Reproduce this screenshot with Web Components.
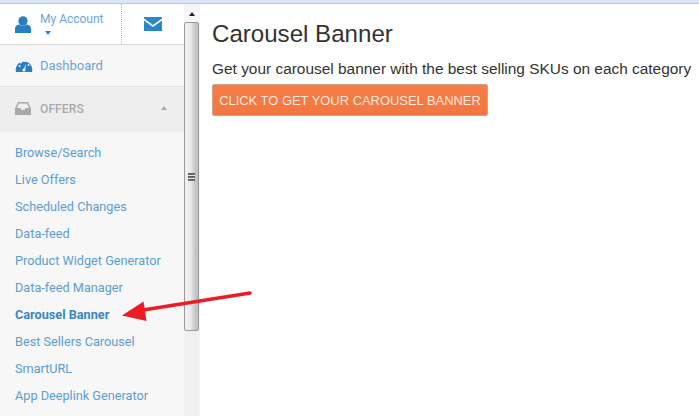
<!DOCTYPE html>
<html>
<head>
<meta charset="utf-8">
<style>
  html, body { margin: 0; height: 100%; background: #fff; overflow: hidden; }
</style>
</head>
<body>
<app-shell>
  <side-nav slot="side">
    <nav-link>Browse/Search</nav-link>
    <nav-link>Live Offers</nav-link>
    <nav-link>Scheduled Changes</nav-link>
    <nav-link>Data-feed</nav-link>
    <nav-link>Product Widget Generator</nav-link>
    <nav-link>Data-feed Manager</nav-link>
    <nav-link active>Carousel Banner</nav-link>
    <nav-link>Best Sellers Carousel</nav-link>
    <nav-link>SmartURL</nav-link>
    <nav-link>App Deeplink Generator</nav-link>
  </side-nav>
  <fake-scrollbar slot="scroll"></fake-scrollbar>
  <banner-panel slot="main"></banner-panel>
</app-shell>
<script>
class AppShell extends HTMLElement {
  constructor() {
    super();
    this.attachShadow({ mode: 'open' });
  }

  connectedCallback() {
    this.shadowRoot.innerHTML = `
      <style>
        :host {
          display: block;
          position: relative;
          width: 699px;
          height: 416px;
          overflow: hidden;
        }
        .strip {
          height: 3px;
          background: #d9e6f6;
          border-bottom: 1px solid #b4c8e0;
        }
        .body {
          display: grid;
          grid-template-columns: 184px 16px 1fr;
          height: 412px;
        }
        svg {
          position: absolute;
          left: 115px;
          top: 285px;
        }
      </style>
      <div class="strip"></div>
      <div class="body">
        <slot name="side"></slot>
        <slot name="scroll"></slot>
        <slot name="main"></slot>
      </div>
      <svg width="140" height="45" viewBox="115 285 140 45">
        <path d="M250 293 L140 310.5" stroke="#ed1c24" stroke-width="3.5" stroke-linecap="round" fill="none"/>
        <path d="M122 315.5 L143.500 301.500 L146.500 321 Z" fill="#ed1c24"/>
      </svg>
    `;
  }
}

class SideNav extends HTMLElement {
  constructor() {
    super();
    this.attachShadow({ mode: 'open' });
  }

  connectedCallback() {
    this.shadowRoot.innerHTML = `
      <style>
        :host {
          display: block;
          background: #f7f7f7;
          font-family: Roboto, "Liberation Sans", sans-serif;
          font-size: 13px;
          color: #428bca;
          overflow: hidden;
        }
        .top {
          display: flex;
          height: 40px;
          background: #fff;
          border-bottom: 1px solid #d8d8d8;
        }
        .account {
          width: 122px;
          display: flex;
          gap: 9px;
          padding: 9px 0 0 15px;
          box-sizing: border-box;
          border-right: 1px dotted #b8b8b8;
        }
        .account svg { margin-top: 3px; }
        .name { line-height: 13px; font-size: 12px; color: #6aa5d6; }
        .caret {
          width: 0;
          height: 0;
          margin: 5px 0 0 5px;
          border: 3.5px solid transparent;
          border-top: 4px solid #2a85c9;
          border-bottom: 0;
        }
        .mail {
          flex: 1;
          display: flex;
          justify-content: center;
          padding-top: 13px;
        }
        .row {
          display: flex;
          align-items: center;
          padding-left: 15px;
          gap: 8px;
        }
        .dash {
          border-bottom: 1px solid #e4e4e4;
          color: #6aa5d6;
          padding-bottom: 1px;
          box-sizing: border-box;
          height: 42px;
          gap: 7px;
        }
        .offers {
          height: 45px;
          background: #eee;
          color: #ababab;
          font-size: 12.2px;
          font-weight: 500;
          position: relative;
          padding-bottom: 2px;
          box-sizing: border-box;
          gap: 9px;
        }
        .up {
          position: absolute;
          right: 17px;
          top: 19px;
          width: 0;
          height: 0;
          border: 3.5px solid transparent;
          border-bottom: 4px solid #ababab;
          border-top: 0;
        }
        .list { padding-top: 7px; }
      </style>
      <div class="top">
        <div class="account">
          <svg width="16" height="17" viewBox="0 0 16 17">
            <ellipse cx="8" cy="5" rx="4.6" ry="4.800" fill="#2a7fc1"/>
            <path d="M0 17 V13 Q0 9 4 8.500 Q8 11 12 8.500 Q16 9 16 13 V17 Z" fill="#2a7fc1"/>
          </svg>
          <div>
            <div class="name">My Account</div>
            <div class="caret"></div>
          </div>
        </div>
        <div class="mail">
          <svg width="18" height="14" viewBox="0 0 18 14">
            <path d="M0 0 H18 V1.500 L9 8 L0 1.500 Z" fill="#2a85c9"/>
            <path d="M0 3.500 L9 10 L18 3.500 V14 H0 Z" fill="#2a85c9"/>
          </svg>
        </div>
      </div>
      <div class="row dash">
        <svg width="18" height="14" viewBox="0 0 17 14">
          <path d="M0.500 14 A8.300 8.300 0 1 1 16.500 14 Z" fill="#2a7fc1"/>
          <circle cx="4" cy="8" r="1" fill="#fff"/>
          <circle cx="5.500" cy="4.500" r="1" fill="#fff"/>
          <circle cx="9" cy="3" r="1" fill="#fff"/>
          <circle cx="13" cy="7" r="1" fill="#fff"/>
          <path d="M8 12 L10.500 5.500 L9.500 12 Z" fill="#fff"/>
          <circle cx="8.500" cy="12" r="1.500" fill="#fff"/>
        </svg>
        <span>Dashboard</span>
      </div>
      <div class="row offers">
        <svg width="16" height="13" viewBox="0 0 16 13">
          <path d="M3 0 H13 L16 6.500 V13 H0 V6.500 Z" fill="#a8a8a8"/>
          <path d="M3.800 1.500 H12.200 L14 6 H10.500 L9.500 8 H6.500 L5.500 6 H2 Z" fill="#eee"/>
        </svg>
        <span>OFFERS</span>
        <div class="up"></div>
      </div>
      <div class="list"><slot></slot></div>
    `;
  }
}

class NavLink extends HTMLElement {
  constructor() {
    super();
    this.attachShadow({ mode: 'open' });
  }

  connectedCallback() {
    const active = this.hasAttribute('active');
    this.shadowRoot.innerHTML = `
      <style>
        :host {
          display: block;
          height: 27px;
          line-height: 27px;
          padding-left: 15px;
          font-size: 12.7px;
          font-weight: ${active ? 700 : 400};
          color: ${active ? '#3b87c4' : '#5c9dd2'};
          white-space: nowrap;
        }
      </style>
      <slot></slot>
    `;
  }
}

class FakeScrollbar extends HTMLElement {
  constructor() {
    super();
    this.attachShadow({ mode: 'open' });
  }

  connectedCallback() {
    this.shadowRoot.innerHTML = `
      <style>
        :host {
          display: flex;
          flex-direction: column;
          background: #f0f0f0;
          border-right: 1px solid #f4f4f4;
          box-sizing: border-box;
        }
        .arrow {
          height: 18px;
          display: flex;
          justify-content: center;
          padding-top: 8px;
          box-sizing: border-box;
          background: #f5f5f5;
        }
        .arrow i {
          width: 0;
          height: 0;
          border: 3.5px solid transparent;
          border-bottom: 4px solid #222;
          border-top: 0;
        }
        .thumb {
          height: 309px;
          width: 15px;
          box-sizing: border-box;
          border: 1px solid #9a9a9a;
          border-radius: 2px;
          background: linear-gradient(90deg, #f0f0f0 0%, #ececec 40%, #c8c8c8 75%, #bdbdbd 100%);
          display: flex;
          align-items: center;
          justify-content: center;
        }
        .grip {
          width: 7px;
          height: 8px;
          background: repeating-linear-gradient(180deg, #555 0, #777 2px, #e4e4e4 2px, #e4e4e4 3px);
        }
      </style>
      <div class="arrow"><i></i></div>
      <div class="thumb"><div class="grip"></div></div>
    `;
  }
}

class BannerPanel extends HTMLElement {
  constructor() {
    super();
    this.attachShadow({ mode: 'open' });
  }

  connectedCallback() {
    this.shadowRoot.innerHTML = `
      <style>
        :host {
          display: block;
          padding: 17px 0 0 12px;
          font-family: "Liberation Sans", Arial, sans-serif;
          color: #333;
          white-space: nowrap;
        }
        h1 {
          margin: 0;
          font-size: 24.1px;
          font-weight: 400;
          line-height: 26px;
        }
        p {
          margin: 12px 0 0;
          font-size: 15.43px;
          line-height: 20px;
        }
        button {
          display: block;
          margin-top: 5px;
          width: 276px;
          height: 32px;
          padding: 0;
          font: 12.95px "Liberation Sans", Arial, sans-serif;
          color: #fde8dc;
          background: linear-gradient(180deg, #f57d48, #f37642);
          border: 1px solid #d9a088;
          border-radius: 2px;
        }
      </style>
      <h1>Carousel Banner</h1>
      <p>Get your carousel banner with the best selling SKUs on each category</p>
      <button>CLICK TO GET YOUR CAROUSEL BANNER</button>
    `;
  }
}

customElements.define('app-shell', AppShell);
customElements.define('side-nav', SideNav);
customElements.define('nav-link', NavLink);
customElements.define('fake-scrollbar', FakeScrollbar);
customElements.define('banner-panel', BannerPanel);
</script>
</body>
</html>
